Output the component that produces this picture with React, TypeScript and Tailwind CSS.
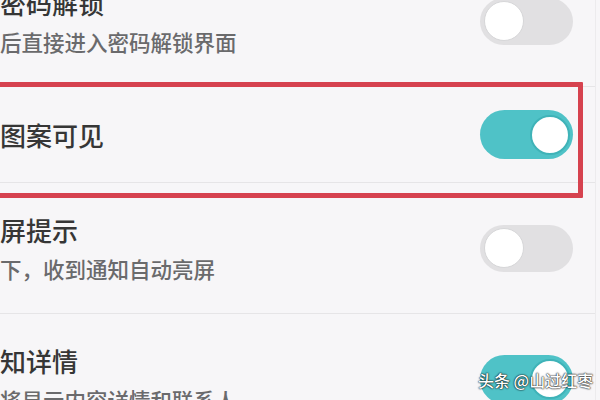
import React from "react";

function Toggle({ on }: { on: boolean }) {
  return on ? (
    <div className="w-[93px] h-[49px] rounded-full bg-[#4fc2c7] flex items-center justify-end pr-[3px] shrink-0">
      <div className="w-[40px] h-[40px] rounded-full bg-white border-[2px] border-[#3fb3b8]" />
    </div>
  ) : (
    <div className="w-[93px] h-[47px] rounded-full bg-[#e1e0e2] flex items-center pl-[4px] shrink-0">
      <div className="w-[40px] h-[40px] rounded-full bg-white border border-[#d6d6d8]" />
    </div>
  );
}

function Row({
  title,
  sub,
  on,
  h,
}: {
  title: string;
  sub?: string;
  on: boolean;
  h: string;
}) {
  return (
    <div className={`flex items-center justify-between border-b border-[#e6e5e7] pr-[22px] ${h}`}>
      <div className="flex flex-col">
        <div className="text-[26px] leading-[32px] text-[#363636] font-[450]">{title}</div>
        {sub && <div className="text-[21.5px] leading-[28px] mt-[9px] text-[#6a6a6c] font-[450]">{sub}</div>}
      </div>
      <Toggle on={on} />
    </div>
  );
}

export default function App() {
  return (
    <div
      className="relative w-[600px] h-[400px] overflow-hidden bg-[#f7f6f8]"
      style={{ fontFamily: '"Noto Sans CJK SC", "Noto Sans", sans-serif' }}
    >
      <div className="w-[596px] border-r border-[#ecebed] flex flex-col mt-[-44px]">
        <Row title="密码解锁" sub="后直接进入密码解锁界面" on={false} h="h-[131px]" />
        <Row title="图案可见" on={true} h="h-[96px]" />
        <Row title="屏提示" sub="下，收到通知自动亮屏" on={false} h="h-[131px]" />
        <Row title="知详情" sub="将显示内容详情和联系人" on={true} h="h-[131px]" />
      </div>
      <div className="absolute left-[-10px] top-[82px] w-[593px] h-[116px] border-[5px] border-[#d6424f] rounded-[1px]" />
      <div className="absolute left-[478px] top-[369px] whitespace-nowrap text-[16px] leading-[22px] font-medium text-white [text-shadow:0_0_2px_#000,0_0_1px_#000]">
        头条 @山过红枣
      </div>
    </div>
  );
}
